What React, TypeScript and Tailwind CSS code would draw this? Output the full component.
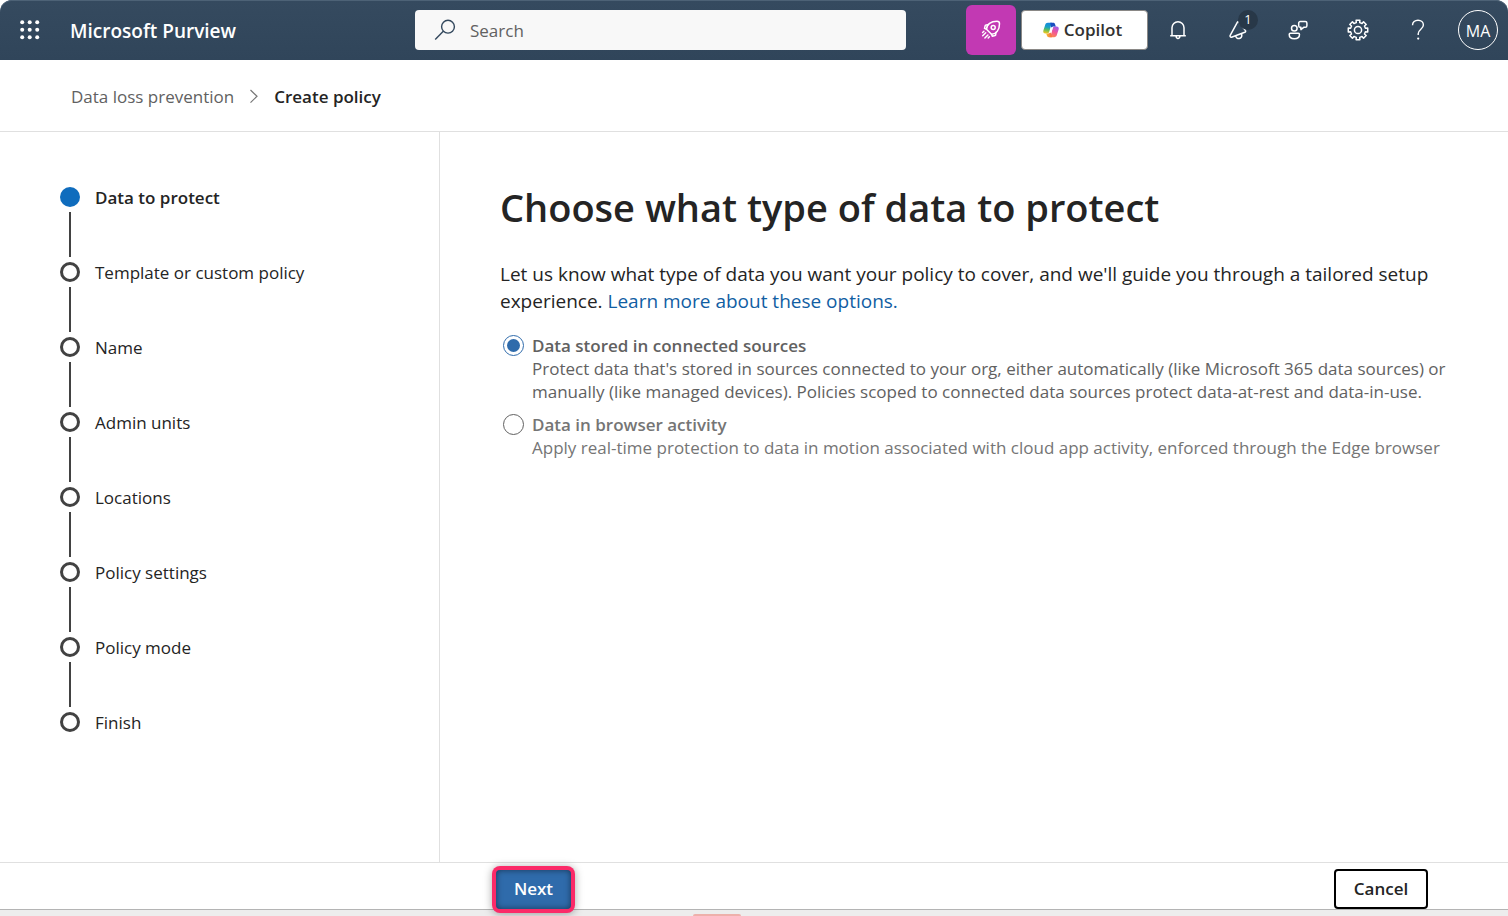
import React from "react";

const steps = [
  "Data to protect",
  "Template or custom policy",
  "Name",
  "Admin units",
  "Locations",
  "Policy settings",
  "Policy mode",
  "Finish",
];

const options = [
  {
    id: "stored",
    title: "Data stored in connected sources",
    text: "Protect data that's stored in sources connected to your org, either automatically (like Microsoft 365 data sources) or manually (like managed devices). Policies scoped to connected data sources protect data-at-rest and data-in-use.",
    tone: "text-[#616161]",
  },
  {
    id: "browser",
    title: "Data in browser activity",
    text: "Apply real-time protection to data in motion associated with cloud app activity, enforced through the Edge browser",
    tone: "text-[#757575]",
  },
];

function Waffle() {
  return (
    <svg width="20" height="20" viewBox="0 0 20 20" fill="currentColor" aria-hidden="true">
      {[2.2, 9.7, 17.2].map((y) =>
        [2.2, 9.7, 17.2].map((x) => <circle key={`${x}-${y}`} cx={x} cy={y} r="2" />)
      )}
    </svg>
  );
}

function SearchIcon() {
  return (
    <svg width="22" height="22" viewBox="0 0 22 22" fill="none" stroke="currentColor" strokeWidth="1.4" aria-hidden="true">
      <circle cx="14" cy="7.7" r="6.4" />
      <path d="M9.3 12.3 1.2 20.6" />
    </svg>
  );
}

function Rocket() {
  return (
    <svg width="20" height="20" viewBox="0 0 20 20" fill="none" stroke="currentColor" strokeWidth="1.5" strokeLinecap="round" strokeLinejoin="round" aria-hidden="true">
      <path d="M5.500 9.200C5.600 4.200 10 1.200 16 1.200c1.600 0 2.500.9 2.500 2.500 0 6-3 10.400-8 10.500z" />
      <circle cx="12.200" cy="7.500" r="2" />
      <path d="M7.200 4.800 5 5c-.4 0-.7.2-.8.600l-.7 2.800 2 .8M14.900 12.500l-.2 2.200c0 .4-.2.700-.6.800l-2.800.7-.8-2" />
      <path d="M4.700 12.800l-3 3M6.900 15l-3 3M2.900 11.300l-1.300 1.200M8.400 16.800 7.200 18" />
    </svg>
  );
}

function CopilotLogo() {
  return (
    <svg width="16" height="16" viewBox="0 0 17 16" aria-hidden="true">
      <defs>
        <linearGradient id="cpLeft" x1="0.5" y1="0" x2="0.35" y2="1">
          <stop offset="0" stopColor="#1687e0" />
          <stop offset="0.4" stopColor="#18a2c4" />
          <stop offset="0.65" stopColor="#5bbd5f" />
          <stop offset="1" stopColor="#f6c81b" />
        </linearGradient>
        <linearGradient id="cpRight" x1="0.7" y1="0" x2="0.3" y2="1">
          <stop offset="0" stopColor="#a45be8" />
          <stop offset="0.5" stopColor="#f0569a" />
          <stop offset="1" stopColor="#ff8a4c" />
        </linearGradient>
        <linearGradient id="cpBottom" x1="0" y1="0" x2="1" y2="0">
          <stop offset="0" stopColor="#fbc02d" />
          <stop offset="1" stopColor="#f2644b" />
        </linearGradient>
      </defs>
      <path d="M5.2.4h5.200c-.8 0-1.200.5-1.500 1.500L6.700 9.600c-.4 1.400-1 2.100-2.400 2.100H2.500C.7 11.700-.1 10.300.4 8.600L2.300 2.600C2.700 1.200 3.600.4 5.200.4z" fill="url(#cpLeft)" />
      <path d="M11.800 15.600H6.600c.8 0 1.200-.5 1.500-1.500l2.200-7.700c.4-1.400 1-2.100 2.400-2.100h1.800c1.800 0 2.600 1.400 2.100 3.100l-1.900 6c-.4 1.400-1.300 2.200-2.900 2.200z" fill="url(#cpRight)" />
      <path d="M7.600.4h3.300c1 0 1.600.6 1.900 1.500l.8 2.400h-2.100c-1.400 0-2.200.6-2.600 2z" fill="#1a4fc0" />
      <path d="M9.400 15.600H6.100c-1 0-1.600-.6-1.900-1.500l-.8-2.400h2.100c1.400 0 2.200-.6 2.600-2z" fill="url(#cpBottom)" />
      <path d="M9.300 6 8.200 10" stroke="#fff" strokeWidth="1.800" strokeLinecap="round" />
    </svg>
  );
}

function Bell() {
  return (
    <svg width="20" height="20" viewBox="0 0 20 20" fill="none" stroke="currentColor" strokeWidth="1.5" strokeLinejoin="round" aria-hidden="true">
      <path d="M2.200 15.800h15.600M4 15.800V7.700a6 6 0 0 1 12 0v8.100M8 16c.2 1.500 1 2.500 2 2.500s1.800-1 2-2.500" />
    </svg>
  );
}

function Megaphone() {
  return (
    <svg width="20" height="20" viewBox="0 0 20 20" fill="none" stroke="currentColor" strokeWidth="1.5" strokeLinejoin="round" strokeLinecap="round" aria-hidden="true">
      <path d="M9.300 2.300 2.200 15.300c-.5 1 .1 2 1.300 1.900l13.300-4.900c.9-.4 1.100-1.200.5-1.900L10.900 2.200c-.5-.6-1.200-.6-1.600.1z" />
      <path d="M7.700 16c.3 1.800 1.900 2.800 3.600 2.500s2.600-1.700 2.500-3.600l-.5-1.100" />
    </svg>
  );
}

function Feedback() {
  return (
    <svg width="20" height="20" viewBox="0 0 20 20" fill="none" stroke="currentColor" strokeWidth="1.5" strokeLinejoin="round" aria-hidden="true">
      <circle cx="6.300" cy="8.300" r="2.800" />
      <path d="M2.400 13.300h7.900c.7 0 1.200.5 1.200 1.200 0 2.700-2.200 4.200-5.200 4.200S1.200 17.200 1.200 14.500c0-.7.5-1.200 1.200-1.200z" />
      <path d="M12.300 1.500h5c1 0 1.600.7 1.600 1.600v2.600c0 1-.7 1.600-1.600 1.600h-1.600l-2.800 2.300V7.300h-.6c-1 0-1.600-.7-1.600-1.600V3.100c0-1 .7-1.600 1.600-1.600z" />
    </svg>
  );
}

// Eight flared teeth: each one contributes two inner and two outer corners.
const gearPath =
  Array.from({ length: 8 }, (_, tooth) =>
    [
      [-13, 7.6],
      [-11, 9.9],
      [11, 9.9],
      [13, 7.6],
    ].map(([offset, radius]) => {
      const angle = ((tooth * 45 + offset) * Math.PI) / 180;
      return `${(11 + radius * Math.sin(angle)).toFixed(2)} ${(11 - radius * Math.cos(angle)).toFixed(2)}`;
    })
  )
    .flat()
    .map((point, i) => (i === 0 ? `M${point}` : `L${point}`))
    .join("") + "z";

function Gear() {
  return (
    <svg width="22" height="22" viewBox="0 0 22 22" fill="none" stroke="currentColor" strokeWidth="1.5" strokeLinejoin="round" aria-hidden="true">
      <path d={gearPath} />
      <circle cx="11" cy="11" r="3.600" />
    </svg>
  );
}

function Question() {
  return (
    <svg width="14" height="22" viewBox="0 0 14 22" fill="none" stroke="currentColor" strokeWidth="1.4" aria-hidden="true">
      <path d="M1.500 6.300C1.500 3.200 3.900 1.200 7 1.200s5.400 2 5.400 4.900c0 4.100-5.200 4.300-5.200 8.700v1.200" />
      <circle cx="7.200" cy="19.600" r="1.100" fill="currentColor" stroke="none" />
    </svg>
  );
}

const iconButton = "flex h-[60px] w-[60px] items-center justify-center text-white";

export default function App() {
  return (
    <div className="flex min-h-screen flex-col bg-white font-['Open_Sans','Noto_Sans',sans-serif] text-[#242424]">
      <header className="flex h-[60px] items-center rounded-t-xl bg-linear-to-b from-[#354a5f] to-[#30455a] shadow-[inset_0_1px_0_#4d6276]">
        <div className="flex w-[415px] shrink-0 items-center">
          <button aria-label="App launcher" className={iconButton}>
            <Waffle />
          </button>
          <span className="pt-[2px] pl-[10px] text-[19px] font-semibold text-white">Microsoft Purview</span>
        </div>
        <label className="flex h-10 w-[491px] items-center gap-[14px] rounded bg-[#f8f8f8] pl-[19px] text-[#33485d]">
          <SearchIcon />
          <input
            type="text"
            aria-label="Search"
            placeholder="Search"
            className="min-w-0 flex-1 bg-transparent pt-[2px] text-[17px] outline-none placeholder:text-[#616161]"
          />
        </label>
        <div className="flex flex-1 items-center justify-end">
          <button aria-label="What's new" className="flex h-[50px] w-[50px] items-center justify-center rounded-md bg-[#c239b3] text-white">
            <Rocket />
          </button>
          <button className="ml-[5px] flex h-10 w-[127px] items-center justify-center gap-[5px] rounded border border-[#8a8886] bg-white pr-1 text-[17px] font-semibold text-[#323130]">
            <CopilotLogo />
            Copilot
          </button>
          <button aria-label="Notifications" className={iconButton}>
            <Bell />
          </button>
          <button aria-label="Announcements" className="relative flex h-[60px] w-[60px] items-center justify-center text-white">
            <Megaphone />
            <span className="absolute top-[10px] right-[10px] flex h-5 w-5 items-center justify-center rounded-full bg-[#283848] text-[13px]">
              1
            </span>
          </button>
          <button aria-label="Feedback" className={iconButton}>
            <Feedback />
          </button>
          <button aria-label="Settings" className={iconButton}>
            <Gear />
          </button>
          <button aria-label="Help" className={iconButton}>
            <Question />
          </button>
          <button aria-label="Account" className={iconButton}>
            <span className="flex h-10 w-10 items-center justify-center rounded-full border border-white pt-[2px] text-[16px]">MA</span>
          </button>
        </div>
      </header>

      <nav aria-label="Breadcrumb" className="flex h-[72px] items-center border-b border-[#e0e0e0] pt-[2px] pl-[71px] text-[17px]">
        <a href="#dlp" className="text-[#616161]">Data loss prevention</a>
        <svg className="mx-[15px]" width="10" height="16" viewBox="0 0 10 16" fill="none" stroke="#767676" strokeWidth="1.2" aria-hidden="true">
          <path d="m1.500 1 6.500 6.300-6.500 6.300" />
        </svg>
        <span className="font-semibold">Create policy</span>
      </nav>

      <div className="flex flex-1">
        <aside className="w-[440px] shrink-0 border-r border-[#e0e0e0] pt-[55px] pl-[60px]">
          <ol>
            {steps.map((step, i) => (
              <li key={step} className="flex gap-[15px]">
                <div className="flex w-5 flex-col items-center">
                  <span
                    className={
                      i === 0
                        ? "h-5 w-5 rounded-full bg-[#0f6cbd]"
                        : "h-5 w-5 rounded-full border-3 border-[#424242]"
                    }
                  />
                  {i < steps.length - 1 && <span className="my-[5px] h-[45px] w-[2px] bg-[#424242]" />}
                </div>
                <span className={i === 0 ? "text-[17px] leading-[22px] font-semibold" : "text-[17px] leading-[22px]"}>{step}</span>
              </li>
            ))}
          </ol>
        </aside>

        <main className="flex-1 pt-[47px] pr-[60px] pl-[60px]">
          <h1 className="text-[38px] leading-[56px] font-semibold">Choose what type of data to protect</h1>
          <p className="mt-[26px] text-[19px] leading-[27px]">
            Let us know what type of data you want your policy to cover, and we'll guide you through a tailored setup
            experience.{" "}
            <a href="#learn" className="text-[#115ea3]">Learn more about these options.</a>
          </p>
          <fieldset aria-label="Type of data" className="mt-[19px] flex flex-col gap-[10px] pl-[3px]">
            {options.map((o, i) => (
              <div key={o.id} className="flex items-start gap-2">
                <input
                  type="radio"
                  name="data-type"
                  id={o.id}
                  defaultChecked={i === 0}
                  className="mt-px h-[21px] w-[21px] shrink-0 appearance-none rounded-full border border-[#616161] bg-clip-content p-[3px] checked:border-[#2f6bab] checked:bg-[#2f6bab]"
                />
                <label htmlFor={o.id} className={o.tone}>
                  <span className="block text-[17px] leading-[23px] font-semibold">{o.title}</span>
                  <span className="block text-[17px] leading-[23px]">{o.text}</span>
                </label>
              </div>
            ))}
          </fieldset>
        </main>
      </div>

      <footer className="flex h-[47px] items-center justify-between border-t border-[#e0e0e0] pt-[6px] pr-[80px] pl-[496px]">
        <button className="z-10 h-[39px] w-[75px] rounded bg-[#2f6bab] text-[17px] font-semibold text-white shadow-[inset_0_0_6px_rgba(0,0,0,0.5),0_0_0_4px_#fb2a68,0_1px_8px_4px_rgba(0,0,0,0.35)]">
          Next
        </button>
        <button className="h-10 w-[94px] rounded border-2 border-black bg-white text-[17px] font-semibold">Cancel</button>
      </footer>
      <div className="flex h-[7px] items-end border-t border-[#b4b4b4] bg-[#ededed] pl-[693px]">
        <div className="h-[2px] w-12 rounded-t bg-[#eeb0ab]" />
      </div>
    </div>
  );
}
